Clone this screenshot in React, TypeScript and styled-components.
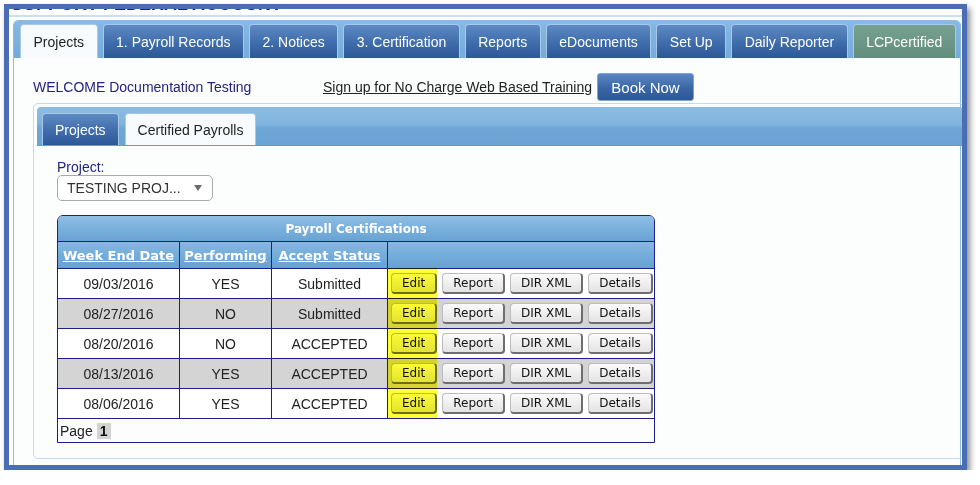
import React from "react";
import styled, { createGlobalStyle } from "styled-components";

const GlobalStyle = createGlobalStyle`
  html, body {
    margin: 0;
    padding: 0;
    background: #ffffff;
  }
  body {
    font-family: "Liberation Sans", Arial, sans-serif;
    font-size: 14px;
    color: #222;
  }
`;

const Frame = styled.div`
  box-sizing: border-box;
  width: 963px;
  height: 466px;
  margin: 4px 0 0 4px;
  border: 5px solid #4a6db4;
  box-shadow: 3px 4px 6px rgba(0, 0, 0, 0.45);
  background: #fcfefe;
  overflow: hidden;
`;

const TitleStrip = styled.div`
  height: 5px;
  overflow: hidden;
  padding-left: 2px;
`;

const TitleText = styled.div`
  margin-top: -15px;
  font-size: 18px;
  line-height: 20px;
  font-weight: bold;
  color: #1b2468;
  white-space: nowrap;
`;

const Rule = styled.div`
  height: 2px;
  margin-top: 1px;
  background: #c9dff2;
`;

const Widget = styled.div`
  margin: 3px 1px 0 4px;
  border: 1px solid #8dbbe4;
  border-radius: 5px 5px 0 0;
  background: #fcfefe;
  height: 460px;
`;

const TabBar = styled.div<{ $inner?: boolean }>`
  display: flex;
  align-items: flex-end;
  gap: ${(p) => (p.$inner ? "6px" : "5px")};
  box-sizing: border-box;
  height: ${(p) => (p.$inner ? "39px" : "37px")};
  margin: ${(p) => (p.$inner ? "3px 0 0 3px" : "0")};
  padding: ${(p) => (p.$inner ? "6px 0 0 5px" : "3px 0 0 6px")};
  border-radius: 4px 4px 0 0;
  background: ${(p) =>
    p.$inner
      ? "linear-gradient(#8dbde2 0%, #80b4dd 45%, #6ea7d6 55%, #6aa4d4 100%)"
      : "linear-gradient(#86b9e3, #75abda)"};
  border-bottom: ${(p) => (p.$inner ? "1px solid #5d9dd6" : "none")};
`;

type TabKind = "active" | "default" | "green";

const Tab = styled.div<{ $kind: TabKind; $inner?: boolean }>`
  box-sizing: border-box;
  height: ${(p) => (p.$inner ? "32px" : "34px")};
  display: flex;
  align-items: center;
  padding: 0 ${(p) => (p.$inner ? "12px" : "12.5px")};
  border: 1px solid #a8c8e8;
  border-bottom: none;
  border-radius: 4px 4px 0 0;
  font-size: 14px;
  white-space: nowrap;
  color: ${(p) => (p.$kind === "active" ? "#222" : "#ffffff")};
  background: ${(p) =>
    p.$kind === "active"
      ? "#f8fbfd"
      : p.$kind === "green"
      ? "linear-gradient(#77a291, #628c7b)"
      : "linear-gradient(#5e8ac4, #3f6cab 55%, #2c5898)"};
`;

const Panel = styled.div`
  padding: 15px 0 0 19px;
`;

const WelcomeRow = styled.div`
  display: flex;
  align-items: center;
  height: 28px;
`;

const Welcome = styled.span`
  width: 290px;
  color: #23237e;
`;

const SignUp = styled.a`
  color: #222;
  text-decoration: underline;
`;

const BookNow = styled.button`
  box-sizing: border-box;
  margin-left: 5px;
  width: 97px;
  height: 28px;
  border: 1px solid #7fa3cf;
  border-radius: 3px;
  background: linear-gradient(#5d87c2, #3a66a6 55%, #2c5896);
  color: #fff;
  font-family: "Liberation Sans", Arial, sans-serif;
  font-size: 15px;
`;

const InnerWidget = styled.div`
  box-sizing: border-box;
  height: 356px;
  margin: 2px -4px 0 0;
  border: 1px solid #c4dbee;
  border-radius: 5px;
`;

const InnerBody = styled.div`
  padding: 13px 0 0 23px;
`;

const Label = styled.div`
  line-height: 16px;
  color: #23237e;
`;

const Select = styled.div`
  box-sizing: border-box;
  width: 156px;
  height: 26px;
  display: flex;
  align-items: center;
  justify-content: space-between;
  padding: 0 10px 0 9px;
  border: 1px solid #a9a9a9;
  border-radius: 5px;
  background: #fff;
  color: #333;
`;

const Caret = styled.span`
  width: 0;
  height: 0;
  border-left: 4px solid transparent;
  border-right: 4px solid transparent;
  border-top: 6px solid #6b6b6b;
`;

const TableWrap = styled.div`
  position: relative;
  width: 598px;
  margin-top: 14px;
`;

const Table = styled.table`
  width: 598px;
  border-collapse: separate;
  border-spacing: 0;
  border: 1px solid #1e1e8a;
  border-radius: 6px 6px 0 0;
  overflow: hidden;
  table-layout: fixed;
`;

const TitleCell = styled.th`
  height: 25px;
  padding: 0;
  border-bottom: 1px solid #1e1e8a;
  background: linear-gradient(#8fbee3, #79b0dc 50%, #69a3d4);
  color: #fff;
  font-family: "DejaVu Sans", Verdana, sans-serif;
  font-size: 12px;
  font-weight: bold;
`;

const HeadCell = styled.th<{ $last?: boolean }>`
  height: 26px;
  padding: 0;
  border-bottom: 1px solid #1e1e8a;
  border-right: ${(p) => (p.$last ? "none" : "1px solid #1e1e8a")};
  background: linear-gradient(#86b9e0, #74acda 50%, #68a2d3);
  text-align: center;
`;

const HeadLink = styled.a`
  color: #fff;
  font-family: "DejaVu Sans", Verdana, sans-serif;
  font-size: 13px;
  font-weight: bold;
  text-decoration: underline;
  white-space: nowrap;
`;

const Cell = styled.td<{ $alt: boolean; $last?: boolean }>`
  height: 29px;
  padding: 0;
  text-align: center;
  border-bottom: 1px solid #1e1e8a;
  border-right: ${(p) => (p.$last ? "none" : "1px solid #1e1e8a")};
  background: ${(p) => (p.$alt ? "#d4d4d4" : "#ffffff")};
  color: #222;
`;

const Actions = styled.div`
  display: flex;
  gap: 5px;
  padding-left: 3px;
`;

const ActionButton = styled.button`
  box-sizing: border-box;
  height: 21px;
  padding: 0 10px;
  border: 1px solid #bdbdbd;
  border-right: 2px solid #6e6e6e;
  border-bottom: 2px solid #6e6e6e;
  border-radius: 4px;
  background: linear-gradient(#fbfbfb, #e3e3e3);
  color: #111;
  font-family: "DejaVu Sans", Verdana, sans-serif;
  font-size: 12px;
  white-space: nowrap;
`;

const PagerCell = styled.td`
  height: 23px;
  padding: 0 0 0 2px;
  background: #fcfefe;
`;

const PageNum = styled.span`
  display: inline-block;
  margin-left: 4px;
  padding: 0 3px;
  background: #d3d3d3;
  font-weight: bold;
  color: #111;
`;

const Highlight = styled.div`
  position: absolute;
  left: 331px;
  top: 53px;
  width: 49px;
  height: 150px;
  background: #ffff36;
  mix-blend-mode: multiply;
  pointer-events: none;
`;

const topTabs: { label: string; kind: TabKind }[] = [
  { label: "Projects", kind: "active" },
  { label: "1. Payroll Records", kind: "default" },
  { label: "2. Notices", kind: "default" },
  { label: "3. Certification", kind: "default" },
  { label: "Reports", kind: "default" },
  { label: "eDocuments", kind: "default" },
  { label: "Set Up", kind: "default" },
  { label: "Daily Reporter", kind: "default" },
  { label: "LCPcertified", kind: "green" },
];

const rows = [
  { date: "09/03/2016", performing: "YES", status: "Submitted" },
  { date: "08/27/2016", performing: "NO", status: "Submitted" },
  { date: "08/20/2016", performing: "NO", status: "ACCEPTED" },
  { date: "08/13/2016", performing: "YES", status: "ACCEPTED" },
  { date: "08/06/2016", performing: "YES", status: "ACCEPTED" },
];

const App = () => {
  return (
    <>
      <GlobalStyle />
      <Frame>
        <TitleStrip>
          <TitleText>SUPPORT FEDERAL ACCOUNT</TitleText>
        </TitleStrip>
        <Rule />
        <Widget>
          <TabBar>
            {topTabs.map((t) => (
              <Tab key={t.label} $kind={t.kind}>
                {t.label}
              </Tab>
            ))}
          </TabBar>
          <Panel>
            <WelcomeRow>
              <Welcome>WELCOME Documentation Testing</Welcome>
              <SignUp href="#">Sign up for No Charge Web Based Training</SignUp>
              <BookNow>Book Now</BookNow>
            </WelcomeRow>
            <InnerWidget>
              <TabBar $inner>
                <Tab $inner $kind="default">
                  Projects
                </Tab>
                <Tab $inner $kind="active">
                  Certified Payrolls
                </Tab>
              </TabBar>
              <InnerBody>
                <Label>Project:</Label>
                <Select>
                  <span>TESTING PROJ...</span>
                  <Caret />
                </Select>
                <TableWrap>
                  <Table>
                    <colgroup>
                      <col style={{ width: 122 }} />
                      <col style={{ width: 92 }} />
                      <col style={{ width: 116 }} />
                      <col />
                    </colgroup>
                    <thead>
                      <tr>
                        <TitleCell colSpan={4}>Payroll Certifications</TitleCell>
                      </tr>
                      <tr>
                        <HeadCell>
                          <HeadLink href="#">Week End Date</HeadLink>
                        </HeadCell>
                        <HeadCell>
                          <HeadLink href="#">Performing</HeadLink>
                        </HeadCell>
                        <HeadCell>
                          <HeadLink href="#">Accept Status</HeadLink>
                        </HeadCell>
                        <HeadCell $last />
                      </tr>
                    </thead>
                    <tbody>
                      {rows.map((r, i) => (
                        <tr key={r.date}>
                          <Cell $alt={i % 2 === 1}>{r.date}</Cell>
                          <Cell $alt={i % 2 === 1}>{r.performing}</Cell>
                          <Cell $alt={i % 2 === 1}>{r.status}</Cell>
                          <Cell $alt={i % 2 === 1} $last>
                            <Actions>
                              <ActionButton>Edit</ActionButton>
                              <ActionButton>Report</ActionButton>
                              <ActionButton>DIR XML</ActionButton>
                              <ActionButton>Details</ActionButton>
                            </Actions>
                          </Cell>
                        </tr>
                      ))}
                      <tr>
                        <PagerCell colSpan={4}>
                          Page<PageNum>1</PageNum>
                        </PagerCell>
                      </tr>
                    </tbody>
                  </Table>
                  <Highlight />
                </TableWrap>
              </InnerBody>
            </InnerWidget>
          </Panel>
        </Widget>
      </Frame>
    </>
  );
};

export default App;
